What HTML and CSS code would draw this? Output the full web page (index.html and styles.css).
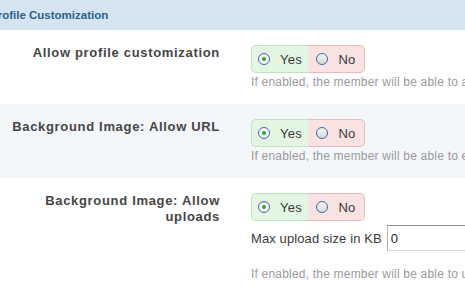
FILE: index.html
```html
<!DOCTYPE html>
<html>
<head>
<meta charset="utf-8">
<link rel="stylesheet" href="styles.css">
</head>
<body>
<div class="page">
  <div class="section-head"><h2 class="section-title">Profile Customization</h2></div>

  <div class="row">
    <div class="label">Allow profile customization</div>
    <div class="control">
      <div class="toggle">
        <label class="seg seg-yes"><span class="radio checked"></span><span>Yes</span></label>
        <label class="seg seg-no"><span class="radio"></span><span>No</span></label>
      </div>
      <div class="hint">If enabled, the member will be able to add custom styling to their profile</div>
    </div>
  </div>

  <div class="row alt">
    <div class="label">Background Image: Allow URL</div>
    <div class="control">
      <div class="toggle">
        <label class="seg seg-yes"><span class="radio checked"></span><span>Yes</span></label>
        <label class="seg seg-no"><span class="radio"></span><span>No</span></label>
      </div>
      <div class="hint">If enabled, the member will be able to enter a URL for a background image</div>
    </div>
  </div>

  <div class="row">
    <div class="label">Background Image: Allow uploads</div>
    <div class="control">
      <div class="toggle">
        <label class="seg seg-yes"><span class="radio checked"></span><span>Yes</span></label>
        <label class="seg seg-no"><span class="radio"></span><span>No</span></label>
      </div>
      <div class="size-line">
        <span class="size-label">Max upload size in KB</span>
        <input class="size-input" type="text" value="0">
      </div>
      <div class="hint hint-gap">If enabled, the member will be able to upload a background image</div>
    </div>
  </div>
</div>
</body>
</html>
```

FILE: styles.css
```css
html, body {
  margin: 0;
  padding: 0;
  background: #ffffff;
  overflow: hidden;
}

.page {
  width: 465px;
  height: 293px;
  overflow: hidden;
  font-family: "Liberation Sans", Arial, sans-serif;
}

.section-head {
  height: 30px;
  background: #d6e4f1;
  display: flex;
  align-items: center;
  overflow: hidden;
}

.section-title {
  margin: 0 0 0 -10px;
  font-size: 11.5px;
  font-weight: bold;
  color: #2a5f8f;
  white-space: nowrap;
}

.row {
  display: grid;
  grid-template-columns: 230px 1fr;
  padding: 15px 0 14px;
  background: #ffffff;
}

.row.alt {
  background: #f4f7fa;
}

.label {
  padding: 0 10px 0 8px;
  text-align: right;
  font-size: 13px;
  line-height: 16px;
  font-weight: bold;
  letter-spacing: 0.68px;
  color: #454545;
}

.control {
  padding-left: 21px;
  min-width: 0;
  white-space: nowrap;
}

.toggle {
  display: flex;
  width: 114px;
  height: 28px;
}

.seg {
  box-sizing: border-box;
  width: 57px;
  height: 28px;
  display: flex;
  align-items: center;
  justify-content: center;
  gap: 10px;
  font-size: 13px;
  color: #3a3a3a;
  letter-spacing: 0.3px;
}

.seg-yes {
  background: #e3f5e3;
  border: 1px solid #bfe3bf;
  border-right: none;
  border-radius: 5px 0 0 5px;
}

.seg-no {
  background: #f8e2e2;
  border: 1px solid #e9baba;
  border-left: none;
  border-radius: 0 5px 5px 0;
}

.radio {
  box-sizing: border-box;
  width: 12px;
  height: 12px;
  border-radius: 50%;
  border: 1px solid #3f6a9c;
  background: linear-gradient(#f4f4f4, #d9d9d9);
  display: flex;
  align-items: center;
  justify-content: center;
  flex: none;
}

.radio.checked {
  background: #f7f7f7;
}

.radio.checked::after {
  content: "";
  width: 4px;
  height: 4px;
  border-radius: 50%;
  background: #2fa52f;
}

.hint {
  margin-top: 2px;
  font-size: 12px;
  line-height: 15px;
  letter-spacing: 0.2px;
  color: #9a9a9a;
}

.hint-gap {
  margin-top: 16px;
}

.size-line {
  margin-top: 4px;
  display: flex;
  align-items: center;
  gap: 5px;
}

.size-label {
  font-size: 13px;
  color: #3a3a3a;
  letter-spacing: 0.1px;
}

.size-input {
  box-sizing: border-box;
  width: 160px;
  height: 26px;
  margin: 0;
  padding: 0 3px;
  border: 1px solid #d4d4d4;
  border-top-color: #8c8c8c;
  border-left-color: #b4b4b4;
  font-family: "Liberation Sans", Arial, sans-serif;
  font-size: 13px;
  color: #222;
  background: #fff;
  flex: none;
}
```
